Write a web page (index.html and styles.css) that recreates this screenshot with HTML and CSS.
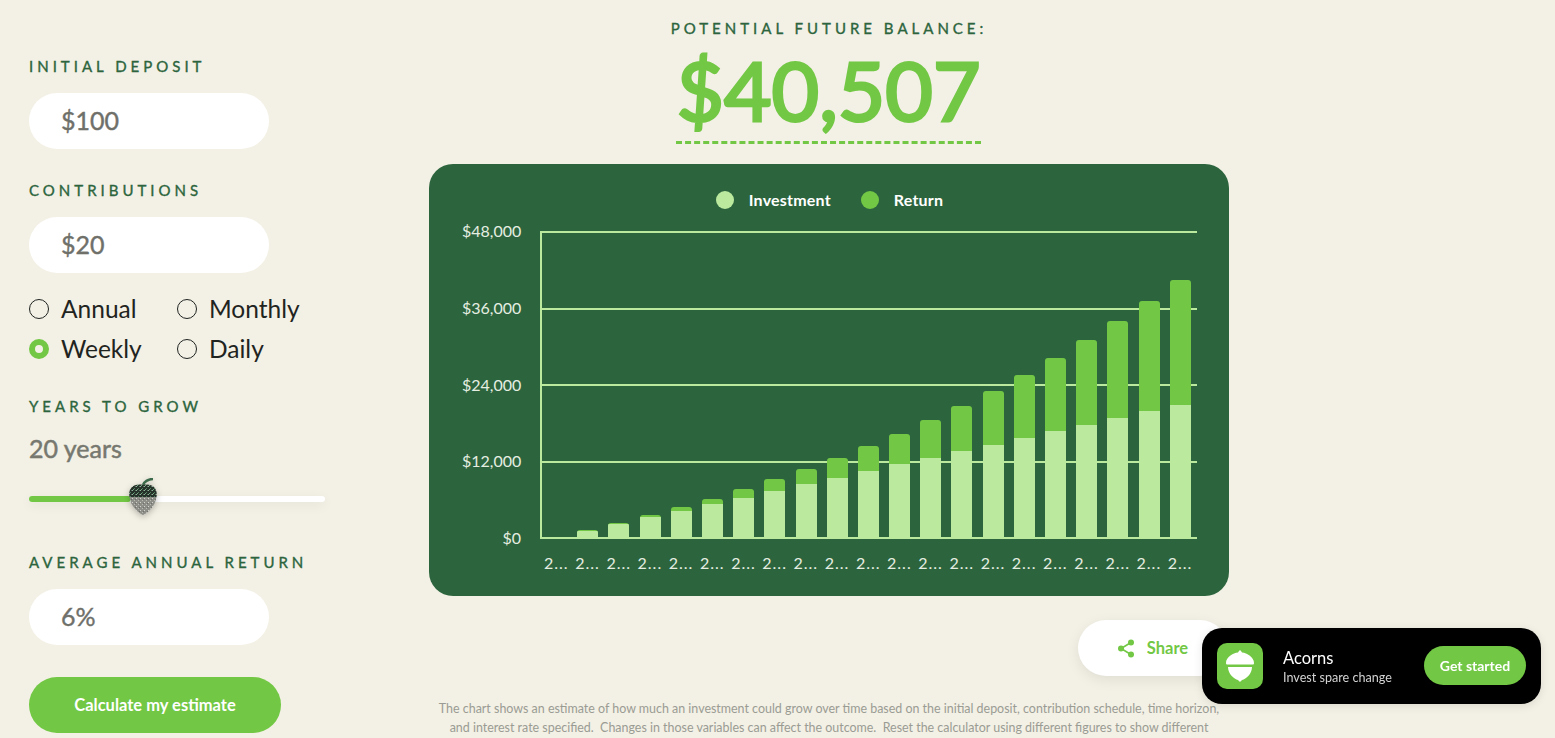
FILE: index.html

```html
<!DOCTYPE html>
<html lang="en">
<head>
  <meta charset="UTF-8" />
  <meta name="viewport" content="width=device-width, initial-scale=1.0" />
  <title>Investment Calculator</title>
  <link rel="stylesheet" href="styles.css">
</head>
<body>
  <aside class="form">
    <label class="label first">Initial deposit</label>
    <div class="field">$100</div>

    <label class="label contrib">Contributions</label>
    <div class="field">$20</div>

    <div class="radios">
      <div class="radio"><span class="dot"></span>Annual</div>
      <div class="radio"><span class="dot"></span>Monthly</div>
      <div class="radio"><span class="dot on"></span>Weekly</div>
      <div class="radio"><span class="dot"></span>Daily</div>
    </div>

    <label class="label years">Years to grow</label>
    <div class="years-value">20 years</div>
    <div class="slider">
      <div class="slider-fill"></div>
      <svg class="thumb" width="30" height="38" viewBox="0 0 30 38">
        <defs>
          <pattern id="dither" width="4" height="4" patternUnits="userSpaceOnUse">
            <rect width="4" height="4" fill="#26332a" />
            <rect width="1" height="1" fill="#8db89a" />
            <rect x="2" y="2" width="1" height="1" fill="#4f7f5c" />
            <rect x="3" y="0" width="1" height="1" fill="#5d6b60" />
            <rect x="1" y="3" width="1" height="1" fill="#74a583" />
          </pattern>
          <pattern id="dither2" width="4" height="4" patternUnits="userSpaceOnUse">
            <rect width="4" height="4" fill="#8d8e88" />
            <rect width="1" height="1" fill="#d3d4cc" />
            <rect x="2" y="2" width="1" height="1" fill="#b9bab2" />
            <rect x="3" y="1" width="1" height="1" fill="#6f706b" />
          </pattern>
        </defs>
        <path d="M15 7 C16 4 20 1 25 1" fill="none" stroke="#3b6b4a" stroke-width="2.5" />
        <path d="M1.5 19 C0 11 5 5 15 7 C25 5 30 11 28.5 19 Z" fill="url(#dither)" />
        <path d="M1.5 19 H28.5 C27 28 21 34 15 37 C9 34 3 28 1.5 19 Z" fill="url(#dither2)" />
      </svg>
    </div>

    <label class="label return">Average annual return</label>
    <div class="field">6%</div>

    <button class="calc">Calculate my estimate</button>
  </aside>

  <main class="results">
    <p class="label balance-label">Potential future balance:</p>
    <h1 class="balance">$40,507</h1>

    <section class="chart">
      <div class="legend">
        <span class="key"><i class="swatch invest"></i>Investment</span>
        <span class="key"><i class="swatch gain"></i>Return</span>
      </div>
      <div class="plot-area">
        <div class="y-axis">
          <span>$48,000</span><span>$36,000</span><span>$24,000</span><span>$12,000</span><span>$0</span>
        </div>
        <div class="plot">
          <div class="grid"><i></i><i></i><i></i><i></i><i></i></div>
          <div class="bars" id="bars"></div>
        </div>
      </div>
      <div class="x-axis" id="xAxis"></div>
    </section>

    <div class="share-row">
      <button class="share">
        <svg width="16" height="19" viewBox="0 0 16 19">
          <path d="M13 3.5 L3 9.5 L13 15.5" fill="none" stroke="#72c844" stroke-width="1.6" />
          <circle cx="13" cy="3.5" r="3" fill="#72c844" />
          <circle cx="3" cy="9.5" r="3" fill="#72c844" />
          <circle cx="13" cy="15.5" r="3" fill="#72c844" />
        </svg>
        Share
      </button>
    </div>

    <p class="disclaimer">The chart shows an estimate of how much an investment could grow over time based on the initial deposit, contribution schedule, time horizon, and interest rate specified.&nbsp; Changes in those variables can affect the outcome.&nbsp; Reset the calculator using different figures to show different</p>
  </main>

  <div class="banner">
    <div class="app-icon">
      <svg width="30" height="34" viewBox="0 0 30 34">
        <path d="M1 14 C1 8 8 4 13 3.5 C13.5 2.5 14.5 1.5 15 1 C15.5 1.5 16.5 2.5 17 3.5 C22 4 29 8 29 14 C29 15 28.5 15.5 27.5 15.5 H2.5 C1.5 15.5 1 15 1 14 Z" fill="#fff" />
        <path d="M3 18 H27 C27 25 21 30 17 31 C16 32 15.5 32.5 15 33 C14.5 32.5 14 32 13 31 C9 30 3 25 3 18 Z" fill="#fff" />
      </svg>
    </div>
    <div class="app-text">
      <div class="app-name">Acorns</div>
      <div class="app-sub">Invest spare change</div>
    </div>
    <button class="get-started">Get started</button>
  </div>

  <script>
    // [total, investment] height of each bar in px
    const bars = [
      [0, 0], [9, 8], [16, 15], [24, 22], [32, 28], [40, 35], [50, 41], [60, 48], [70, 55],
      [81, 61], [93, 68], [105, 75], [119, 81], [133, 88], [148, 94], [164, 101],
      [181, 108], [199, 114], [218, 121], [238, 128], [259, 134]
    ];

    const barsEl = document.getElementById("bars");
    const xAxis = document.getElementById("xAxis");
    bars.forEach(b => {
      const el = document.createElement("div");
      el.className = "bar";
      el.style.height = b[0] + "px";
      el.innerHTML = `<div class="bar-invest" style="height:${b[1]}px"></div>`;
      barsEl.appendChild(el);

      const tick = document.createElement("span");
      tick.textContent = "2...";
      xAxis.appendChild(tick);
    });
  </script>
</body>
</html>
```

FILE: styles.css

```css
* { box-sizing: border-box; margin: 0; padding: 0; }
html, body { height: 738px; overflow: hidden; }
body { font-family: 'Lato', 'Noto Sans', sans-serif; background: #f3f0e5; color: #1f2421; display: flex; }
button { font-family: inherit; border: none; cursor: pointer; }

.label { display: block; font-size: 15px; line-height: 18px; font-weight: 400; -webkit-text-stroke: 0.35px #2c653d; letter-spacing: 4px; text-transform: uppercase; color: #2c653d; }

.form { width: 429px; padding-left: 29px; flex-shrink: 0; }
.first { margin-top: 57px; }
.contrib { margin-top: 32px; }
.years { margin-top: 33px; }
.field { width: 240px; height: 56px; margin-top: 18px; padding-left: 32px; background: #fff; border-radius: 28px; font-size: 25px; line-height: 54px; -webkit-text-stroke: 0.4px #6f706a; color: #6f706a; }

.radios { display: grid; grid-template-columns: 148px 148px; row-gap: 10px; margin-top: 21px; }
.radio { display: flex; align-items: center; gap: 12px; font-size: 24.5px; line-height: 30px; height: 30px; color: #1f2421; }
.dot { width: 20px; height: 20px; border-radius: 50%; border: 1px solid #1f2421; }
.dot.on { border: 6px solid #72c844; background: #f3f0e5; }

.years-value { margin-top: 18px; font-size: 25px; line-height: 30px; -webkit-text-stroke: 0.5px #77786f; color: #77786f; }
.slider { position: relative; width: 296px; height: 6px; margin-top: 33px; margin-bottom: 51px; background: #fff; border-radius: 3px; box-shadow: 0 3px 12px rgba(0,0,0,0.07); }
.slider-fill { width: 102px; height: 6px; background: #72c844; border-radius: 3px; }
.thumb { position: absolute; left: 99px; top: -18px; filter: drop-shadow(0 2px 3px rgba(0,0,0,0.25)); }
.calc { display: block; width: 252px; height: 56px; margin-top: 32px; background: #72c844; color: #fff; border-radius: 28px; font-size: 16.5px; font-weight: 700; }

.results { width: 800px; flex-shrink: 0; text-align: center; }
.balance-label { margin-top: 19px; }
.balance { width: 305px; height: 100px; margin: 7px 0 0 247px; border-bottom: 3px dashed #72c844; font-size: 82px; line-height: 90px; font-weight: 400; -webkit-text-stroke: 3px #72c844; color: #72c844; }

.chart { width: 800px; height: 432px; margin-top: 20px; padding: 26px 32px 0 33px; background: #2c653d; border-radius: 24px; color: #fff; }
.legend { display: flex; justify-content: center; gap: 30px; height: 20px; font-size: 16px; letter-spacing: 0.2px; line-height: 20px; font-weight: 700; }
.key { display: flex; align-items: center; gap: 15px; }
.swatch { width: 18px; height: 18px; border-radius: 50%; }
.swatch.invest { background: #bbea9f; }
.swatch.gain { background: #72c844; }

.plot-area { display: flex; margin-top: 21px; }
.y-axis { width: 78px; height: 323px; padding-right: 19px; display: flex; flex-direction: column; justify-content: space-between; margin-top: -8px; margin-bottom: -8px; font-size: 16px; line-height: 16px; text-align: right; color: #e6eee2; }
.plot { position: relative; width: 657px; height: 308px; border-left: 2px solid #bbea9f; }
.grid { position: absolute; inset: 0; display: flex; flex-direction: column; justify-content: space-between; }
.grid i { display: block; height: 2px; background: #bbea9f; }
.bars { position: absolute; left: 4px; right: 0; bottom: 0; height: 300px; display: flex; align-items: flex-end; }
.bar { width: 21px; margin-right: 10.2px; background: #72c844; border-radius: 3px 3px 0 0; display: flex; align-items: flex-end; overflow: hidden; flex-shrink: 0; }
.bar-invest { width: 100%; background: #bbea9f; }

.x-axis { display: flex; margin-left: 82px; margin-top: 14px; font-size: 16px; line-height: 20px; letter-spacing: 1px; color: #e6eee2; }
.x-axis span { width: 31.2px; flex-shrink: 0; text-align: left; white-space: nowrap; }

.share-row { display: flex; justify-content: flex-end; margin-top: 24px; padding-right: 1px; }
.share { display: flex; align-items: center; justify-content: center; gap: 13px; width: 150px; height: 56px; background: #fff; border-radius: 28px; color: #72c844; font-size: 16.5px; font-weight: 700; box-shadow: 0 4px 14px rgba(0,0,0,0.08); }

.disclaimer { width: 790px; margin: 23px auto 0; font-size: 12.45px; line-height: 19px; color: #9a9c94; }

.banner { position: fixed; left: 1202px; top: 628px; width: 339px; height: 76px; display: flex; align-items: center; padding: 0 15px; background: #000; border-radius: 20px; color: #fff; box-shadow: 0 2px 10px rgba(0,0,0,0.1); }
.app-icon { width: 46px; height: 46px; border-radius: 10px; background: #72c844; display: flex; align-items: center; justify-content: center; }
.app-text { margin-left: 20px; flex: 1; padding-top: 1px; }
.app-name { font-size: 16.5px; line-height: 20px; }
.app-sub { font-size: 12.6px; line-height: 17px; margin-top: 1px; color: #d2d2d2; }
.get-started { width: 102px; height: 39px; margin-bottom: 1px; background: #72c844; color: #fff; border-radius: 20px; font-size: 14px; font-weight: 700; }
```
